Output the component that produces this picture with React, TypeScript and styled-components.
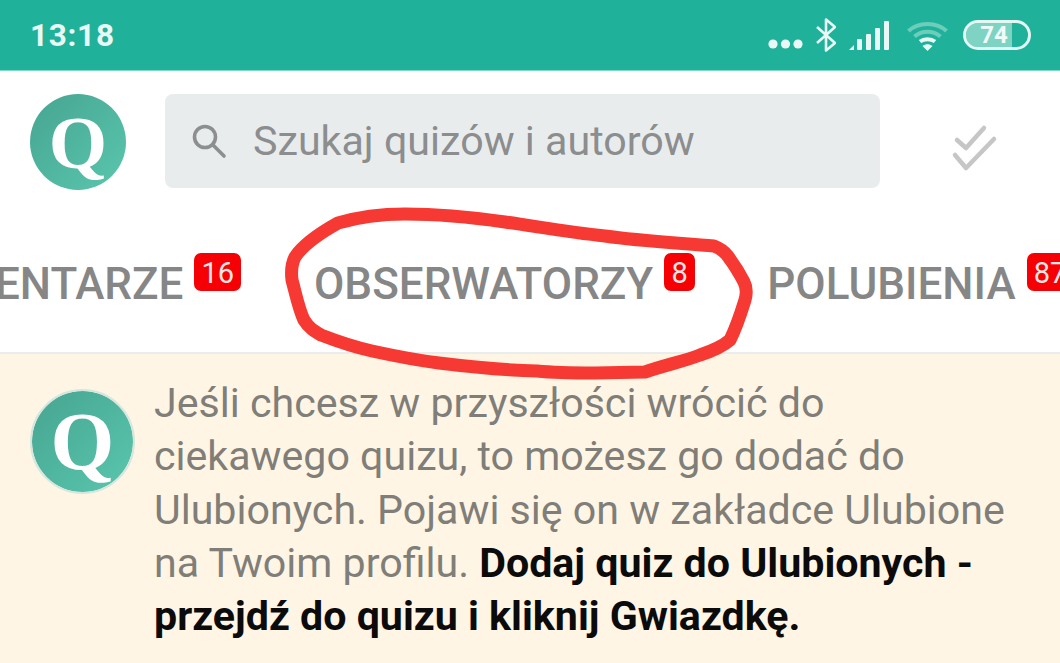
import React from "react";
import styled, { createGlobalStyle } from "styled-components";

const Global = createGlobalStyle`
  html, body { margin: 0; padding: 0; background: #fff; }
  body { font-family: Roboto, "Liberation Sans", sans-serif; }
`;

const Page = styled.div`
  position: relative;
  width: 1060px;
  height: 663px;
  overflow: hidden;
  display: flex;
  flex-direction: column;
  background: #fff;
`;

const StatusBar = styled.div`
  height: 71px;
  flex: none;
  box-sizing: border-box;
  background: #20b19b;
  border-bottom: 1px solid #7fd8c8;
  display: flex;
  align-items: center;
  justify-content: space-between;
  padding: 0 29px 0 30px;
  color: #e9f8f4;
`;

const Clock = styled.span`
  font-size: 31.5px;
  font-weight: 700;
  letter-spacing: 0.7px;
`;

const StatusIcons = styled.div`
  display: flex;
  align-items: center;
`;

const Glyph = styled.svg<{ $left?: number; $top?: number }>`
  flex: none;
  margin-left: ${(p) => p.$left ?? 0}px;
  margin-top: ${(p) => p.$top ?? 0}px;
`;

const BatteryShell = styled.div`
  width: 68px;
  height: 30px;
  margin-left: 15px;
  box-sizing: border-box;
  border: 3px solid #e4f7f2;
  border-radius: 15px;
  display: flex;
  align-items: center;
  justify-content: center;
  background: linear-gradient(90deg, #7fd3c3 0 74%, transparent 74%);
  background-clip: padding-box;
  font-size: 24px;
  font-weight: 700;
  color: #f0fbf8;
  padding-right: 6px;
`;

const Header = styled.div`
  height: 117px;
  flex: none;
  box-sizing: border-box;
  display: flex;
  align-items: flex-start;
  padding: 23px 0 0 30px;
`;

const Logo = styled.div<{ $size: number; $ring?: boolean }>`
  width: ${(p) => p.$size}px;
  height: ${(p) => p.$size}px;
  flex: none;
  box-sizing: border-box;
  border-radius: 50%;
  background: linear-gradient(135deg, #46a591, #5ac6ad);
  ${(p) => (p.$ring ? "border: 2px solid #d5e6df; background-clip: padding-box;" : "")}
  display: flex;
  align-items: center;
  justify-content: center;
  color: #fff;
  font-family: "Liberation Serif", serif;
  font-weight: 700;
  font-size: ${(p) => Math.round(p.$size * 0.78)}px;
  line-height: 1;
`;

const SearchBox = styled.div`
  width: 715px;
  height: 94px;
  margin-left: 39px;
  flex: none;
  box-sizing: border-box;
  background: #e9eced;
  border-radius: 8px;
  display: flex;
  align-items: center;
  padding-left: 26px;
  gap: 26px;
  color: #8b8d8e;
  font-size: 41.2px;
`;

const CheckButton = styled.div`
  margin: 30px 0 0 70px;
  width: 48px;
  height: 48px;
`;

const Tabs = styled.div`
  height: 166px;
  flex: none;
  box-sizing: border-box;
  border-bottom: 2px solid #e9edee;
  display: flex;
  align-items: flex-start;
  padding-top: 66px;
  margin-left: -101px;
  width: 1400px;
`;

const Tab = styled.div<{ $gap: number }>`
  flex: none;
  display: flex;
  align-items: flex-start;
  margin-right: ${(p) => p.$gap}px;
`;

const TabLabel = styled.span`
  font-size: 44px;
  font-weight: 500;
  line-height: 60px;
  color: #868686;
`;

const Badge = styled.span`
  box-sizing: border-box;
  min-width: 31px;
  height: 38px;
  margin: -1px 0 0 11px;
  padding: 1px 7px 0;
  background: #f50005;
  border-radius: 7px;
  color: #fbe6e6;
  font-size: 29px;
  line-height: 38px;
  text-align: center;
`;

const Notice = styled.div`
  flex: 1;
  background: #fff5e5;
  display: flex;
  align-items: flex-start;
  padding: 23px 0 0 30px;
`;

const Message = styled.p`
  margin: 0 0 0 19px;
  width: 870px;
  font-size: 41.15px;
  line-height: 53.3px;
  color: #7f7e78;
`;

const Strong = styled.strong`
  color: #0b0b0b;
  font-weight: 700;
`;

const AvatarSlot = styled.div`
  padding-top: 12px;
`;

const Annotation = styled.svg`
  position: absolute;
  left: 0;
  top: 0;
  pointer-events: none;
`;

export default function App() {
  return (
    <Page>
      <Global />
      <StatusBar>
        <Clock>13:18</Clock>
        <StatusIcons>
          <Glyph width="35" height="10" viewBox="0 0 35 10" fill="#e9f8f4" $top={18}>
            <circle cx="5" cy="5" r="4.6" />
            <circle cx="17.5" cy="5" r="4.6" />
            <circle cx="30" cy="5" r="4.6" />
          </Glyph>
          <Glyph width="20" height="34" viewBox="0 0 20 34" fill="none" stroke="#e9f8f4" strokeWidth="2.6" $left={13}>
            <path d="M1 9 L19 25 L10 32.5 V1.5 L19 9 L1 25" strokeLinejoin="round" />
          </Glyph>
          <Glyph width="41" height="29" viewBox="0 0 41 29" fill="#e9f8f4" $left={13}>
            <path d="M0 29 L5 24 V29 Z" />
            <rect x="8" y="18" width="5" height="11" rx="1" />
            <rect x="17" y="13" width="5" height="16" rx="1" />
            <rect x="26" y="7" width="5" height="22" rx="1" />
            <rect x="35" y="0" width="5" height="29" rx="1" />
          </Glyph>
          <Glyph width="41" height="30" viewBox="0 0 41 30" fill="none" $left={17} $top={2}>
            <path d="M1.5 10 C11 0.5 30 0.5 39.5 10" stroke="#6ccdbb" strokeWidth="4" />
            <path d="M7.5 15.5 C15 9 26 9 33.5 15.5" stroke="#6ccdbb" strokeWidth="4" />
            <path d="M13 20.5 C17 17.5 24 17.5 28 20.5" stroke="#e9f8f4" strokeWidth="4" />
            <path d="M15.5 25 L20.5 30 L25.5 25 C22.5 22.5 18.5 22.5 15.5 25 Z" fill="#e9f8f4" />
          </Glyph>
          <BatteryShell>74</BatteryShell>
        </StatusIcons>
      </StatusBar>

      <Header>
        <Logo $size={96}>Q</Logo>
        <SearchBox>
          <svg width="36" height="36" viewBox="0 0 36 36" fill="none" stroke="#8c8e8f" strokeWidth="3.6" strokeLinecap="round">
            <circle cx="14" cy="14" r="10.5" />
            <path d="M22 22 L33 33" />
          </svg>
          <span>Szukaj quizów i autorów</span>
        </SearchBox>
        <CheckButton>
          <svg width="48" height="48" viewBox="0 0 48 48" fill="none" stroke="#c6c6c6" strokeWidth="4.5" strokeLinecap="round" strokeLinejoin="round">
            <path d="M7 16 L16 24 L34 4" />
            <path d="M5 31 L16 44 L44 15" />
          </svg>
        </CheckButton>
      </Header>

      <Tabs>
        <Tab $gap={73}>
          <TabLabel>KOMENTARZE</TabLabel>
          <Badge>16</Badge>
        </Tab>
        <Tab $gap={72}>
          <TabLabel>OBSERWATORZY</TabLabel>
          <Badge>8</Badge>
        </Tab>
        <Tab $gap={0}>
          <TabLabel>POLUBIENIA</TabLabel>
          <Badge>87</Badge>
        </Tab>
      </Tabs>

      <Notice>
        <AvatarSlot>
          <Logo $size={105} $ring>Q</Logo>
        </AvatarSlot>
        <Message>
          Jeśli chcesz w przyszłości wrócić do ciekawego quizu, to możesz go dodać do Ulubionych. Pojawi się on w zakładce Ulubione na Twoim profilu.{" "}
          <Strong>Dodaj quiz do Ulubionych - przejdź do quizu i kliknij Gwiazdkę.</Strong>
        </Message>
      </Notice>

      <Annotation width="1060" height="663" viewBox="0 0 1060 663" fill="none">
        <path
          d="M714 246 C680 243 640 241 605 236 C565 232 535 226 505 222 C470 217 435 214 405 214 C380 214 355 218 338 223 C320 233 303 245 295 257 C291 265 291 272 292 280 C296 295 299 310 304 320 C309 328 314 331 321 335 C339 342 354 347 372 351 C395 356 415 360 439 363 C471 367 501 370 537 371 C557 373 577 373 595 373 L645 372 C665 365 685 361 700 355 C712 351 722 347 730 340 C736 328 741 313 745 300 C747 293 747 288 744 282 C739 272 733 263 727 255 C723 250 719 248 714 246 Z"
          stroke="#f63a33"
          strokeWidth="13"
          strokeLinejoin="round"
        />
      </Annotation>
    </Page>
  );
}
